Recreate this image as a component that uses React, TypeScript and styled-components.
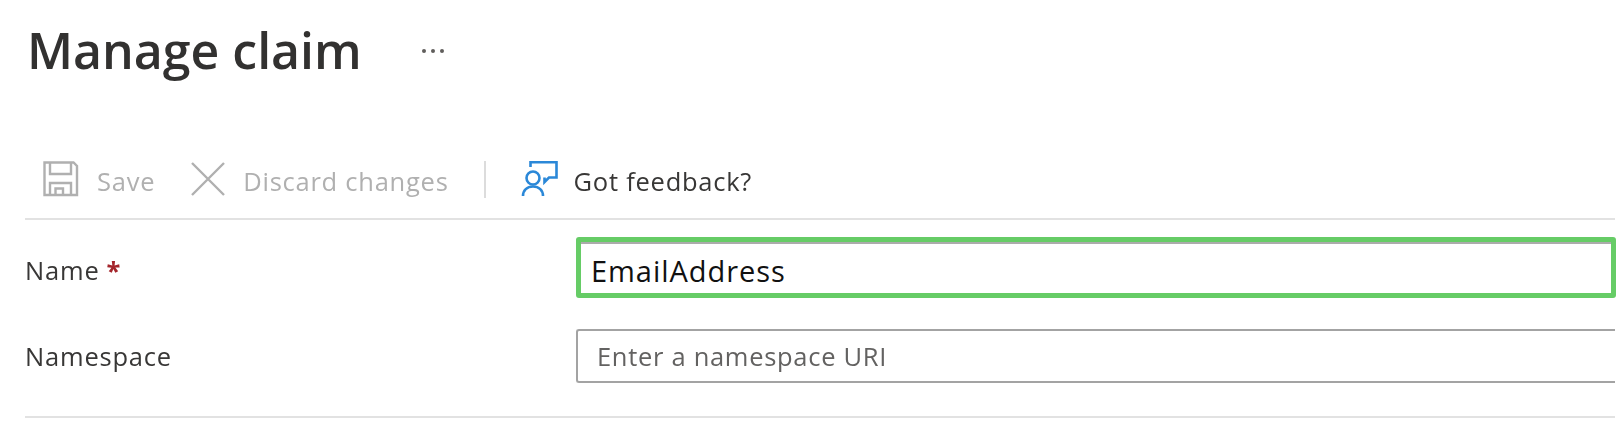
import React from "react";
import styled, { createGlobalStyle } from "styled-components";

const Global = createGlobalStyle`
  html, body { margin: 0; padding: 0; background: #fff; }
  body { font-family: "Open Sans", "Noto Sans", sans-serif; }
`;

const Page = styled.div`
  width: 1617px;
  height: 432px;
  box-sizing: border-box;
  padding: 0 2px 0 25px;
  overflow: hidden;
  background: #fff;
`;

const Header = styled.header`
  height: 145px;
  box-sizing: border-box;
  padding: 14px 0 0 2px;
  display: flex;
  align-items: flex-start;
`;

const Title = styled.h1`
  margin: 0;
  font-size: 50px;
  line-height: 72px;
  font-weight: 600;
  color: #323130;
  filter: blur(0.6px);
`;

const More = styled.span`
  display: flex;
  gap: 5px;
  margin: 35px 0 0 60px;
`;

const Dot = styled.i`
  width: 4px;
  height: 4px;
  border-radius: 50%;
  background: #605e5c;
`;

const Toolbar = styled.div`
  height: 75px;
  box-sizing: border-box;
  border-bottom: 2px solid #e2e2e2;
  display: flex;
  align-items: center;
  padding: 0 0 5px 18px;
`;

const Action = styled.span<{ $disabled?: boolean; $gap: number }>`
  display: flex;
  align-items: center;
  gap: ${(p) => p.$gap}px;
  font-size: 25.5px;
  letter-spacing: 0.75px;
  color: ${(p) => (p.$disabled ? "#b0b0b0" : "#383736")};
  filter: blur(0.6px);
  svg { display: block; flex: none; }
`;

const ActionText = styled.span`
  padding-top: 3px;
`;

const SaveAction = styled(Action)`
  margin-right: 35px;
`;

const Divider = styled.span`
  width: 2px;
  height: 37px;
  background: #dcdcdc;
  margin: 0 35px;
`;

const Form = styled.form`
  margin: 0;
  padding: 17px 0 33px;
  border-bottom: 2px solid #e2e2e2;
  display: grid;
  grid-template-columns: 551px 1fr;
  align-items: center;
  row-gap: 31px;
`;

const Label = styled.label`
  font-size: 25.5px;
  letter-spacing: 0.8px;
  color: #383736;
  filter: blur(0.5px);
`;

const NameLabel = styled(Label)`
  padding-top: 4px;
`;

const Star = styled.span`
  color: #a4262c;
  font-weight: 700;
  margin-left: 7px;
`;

const NameBox = styled.div`
  height: 61px;
  margin-right: -1px;
  box-sizing: border-box;
  border: 5px solid #66cc66;
  border-radius: 3px;
  background: #fff;
  box-shadow: inset 0 2px 0 #ababab;
  display: flex;
  align-items: center;
  padding: 5px 0 0 10px;
  font-size: 29px;
  letter-spacing: 0.95px;
  color: #111;
`;

const UriBox = styled.div`
  height: 54px;
  box-sizing: border-box;
  border: 2px solid #a3a3a3;
  border-right: 0;
  border-radius: 3px 0 0 3px;
  display: flex;
  align-items: center;
  padding-left: 19px;
  font-size: 25.5px;
  letter-spacing: 0.7px;
  color: #636261;
`;

const Placeholder = styled.span`
  filter: blur(0.5px);
`;

export default function App() {
  return (
    <Page>
      <Global />
      <Header>
        <Title>Manage claim</Title>
        <More>
          <Dot />
          <Dot />
          <Dot />
        </More>
      </Header>
      <Toolbar>
        <SaveAction $disabled $gap={18}>
          <svg width="36" height="36" viewBox="0 0 36 36" fill="none" stroke="#b0b0b0" strokeWidth="2.4">
            <path d="M1.500 1.500h29l3.500 3.500v29H1.500z" />
            <path d="M7 1.500v11.500h21V1.500" />
            <path d="M7 34V22h21v12" />
            <path d="M12.500 34v-6.500h7.500V34" />
          </svg>
          <ActionText>Save</ActionText>
        </SaveAction>
        <Action $disabled $gap={17}>
          <svg width="36" height="36" viewBox="0 0 36 36" fill="none" stroke="#b0b0b0" strokeWidth="2.4">
            <path d="M2 2l32 32M34 2L2 34" />
          </svg>
          <ActionText>Discard changes</ActionText>
        </Action>
        <Divider />
        <Action $gap={16}>
          <svg width="37" height="36" viewBox="0 0 37 36" fill="none" stroke="#2b88d8" strokeWidth="2.6">
            <path d="M9.500 6V1.300H35.500V16.500H28l-4.500 4.500v-4.500" />
            <circle cx="12" cy="17" r="6.500" />
            <path d="M2 35c0-5.500 4-9.500 10-9.500s10 4 10 9.500" />
          </svg>
          <ActionText>Got feedback?</ActionText>
        </Action>
      </Toolbar>
      <Form>
        <NameLabel>
          Name<Star>*</Star>
        </NameLabel>
        <NameBox>EmailAddress</NameBox>
        <Label>Namespace</Label>
        <UriBox>
          <Placeholder>Enter a namespace URI</Placeholder>
        </UriBox>
      </Form>
    </Page>
  );
}
